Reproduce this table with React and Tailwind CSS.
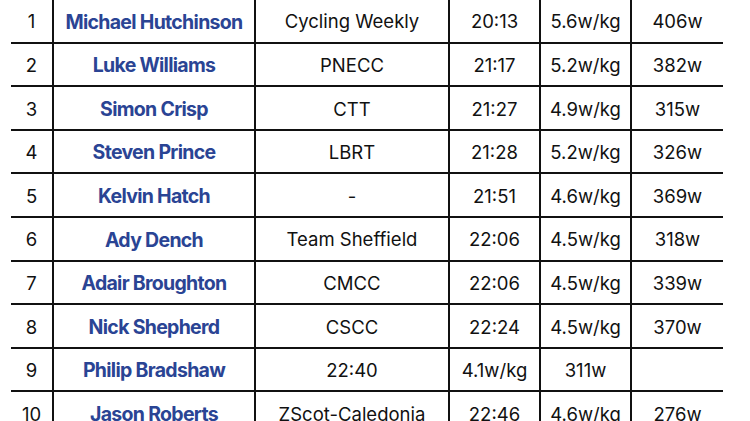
import React from "react";

const rows = [
  ["1", "Michael Hutchinson", "Cycling Weekly", "20:13", "5.6w/kg", "406w"],
  ["2", "Luke Williams", "PNECC", "21:17", "5.2w/kg", "382w"],
  ["3", "Simon Crisp", "CTT", "21:27", "4.9w/kg", "315w"],
  ["4", "Steven Prince", "LBRT", "21:28", "5.2w/kg", "326w"],
  ["5", "Kelvin Hatch", "-", "21:51", "4.6w/kg", "369w"],
  ["6", "Ady Dench", "Team Sheffield", "22:06", "4.5w/kg", "318w"],
  ["7", "Adair Broughton", "CMCC", "22:06", "4.5w/kg", "339w"],
  ["8", "Nick Shepherd", "CSCC", "22:24", "4.5w/kg", "370w"],
  ["9", "Philip Bradshaw", "22:40", "4.1w/kg", "311w", ""],
  ["10", "Jason Roberts", "ZScot-Caledonia", "22:46", "4.6w/kg", "276w"],
];

const cell = "flex items-center justify-center pt-[3px] text-[18.5px] text-[#111]";

export default function App() {
  return (
    <div
      className="w-[750px] h-[421px] overflow-hidden bg-white pl-[11px]"
      style={{ fontFamily: "Inter, 'Noto Sans', sans-serif" }}
    >
      <div className="w-[712px]">
        {rows.map((r, i) => (
          <div
            key={i}
            className="grid grid-cols-[43px_202px_194px_91px_91px_91px] h-[43.6px] border-b-2 border-[#111]"
          >
            <div className={`${cell} border-r-2 border-[#111]`}>{r[0]}</div>
            <div className="flex items-center justify-center pt-[3px] text-[19.5px] font-bold tracking-[-0.7px] text-[#2a4494] border-r-2 border-[#111] whitespace-nowrap">
              {r[1]}
            </div>
            <div className={`${cell} border-r-2 border-[#111]`}>{r[2]}</div>
            <div className={`${cell} border-r-2 border-[#111]`}>{r[3]}</div>
            <div className={`${cell} border-r-2 border-[#111]`}>{r[4]}</div>
            <div className={cell}>{r[5]}</div>
          </div>
        ))}
      </div>
    </div>
  );
}
